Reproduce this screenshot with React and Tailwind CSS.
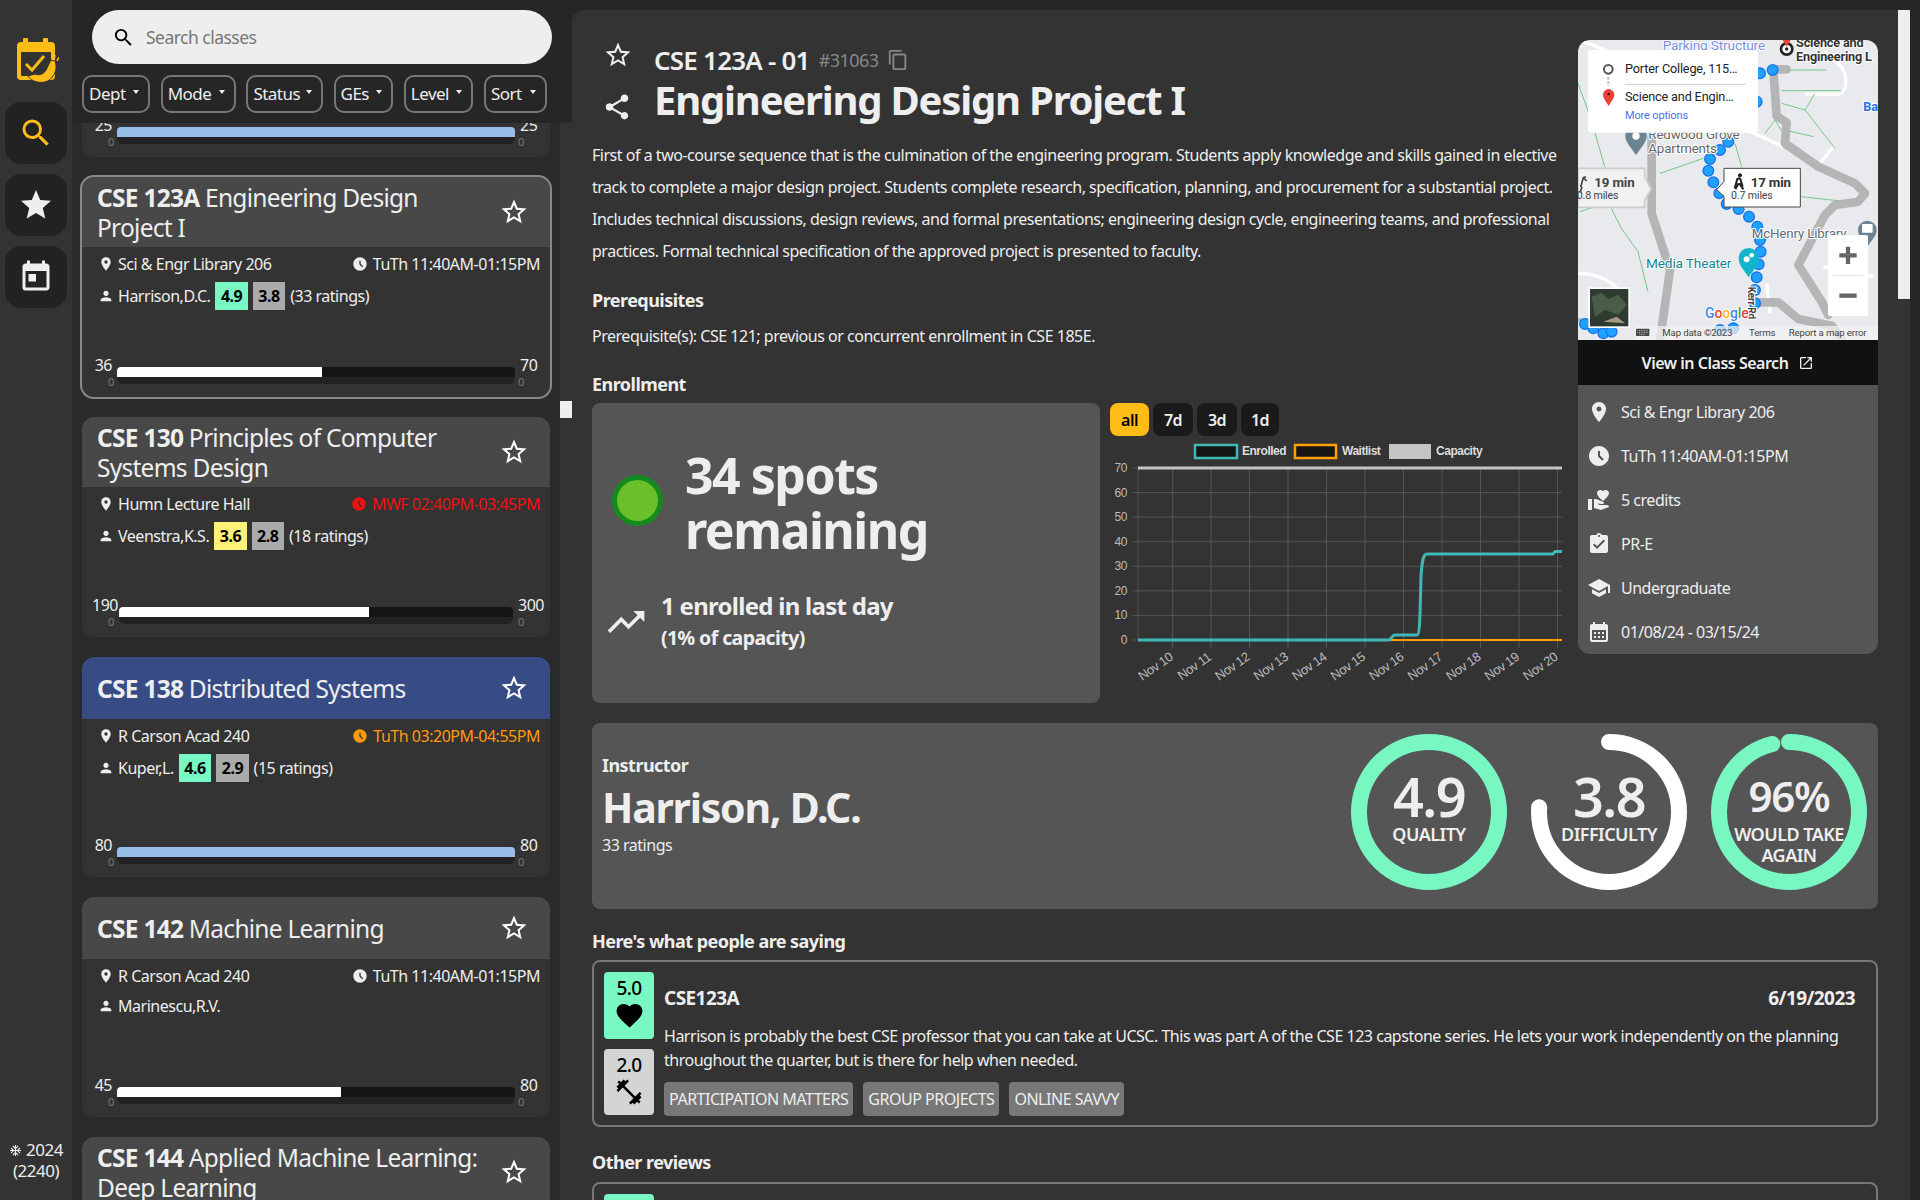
import React from "react";
import {
  MdSearch, MdStar, MdStarBorder, MdToday, MdLocationOn, MdAccessTimeFilled, MdPerson, MdShare,
  MdContentCopy, MdOpenInNew, MdTrendingUp, MdVolunteerActivism, MdAssignmentTurnedIn, MdSchool,
  MdCalendarMonth, MdFavorite, MdFitnessCenter, MdAcUnit,
} from "react-icons/md";

function Logo() {
  return (
    <svg width="42" height="46" viewBox="0 0 42 46" className="block">
      <rect x="0" y="4" width="38" height="38" rx="4" fill="#fdbd16" />
      <rect x="6" y="0" width="5" height="8" rx="1" fill="#fdbd16" />
      <rect x="26" y="0" width="5" height="8" rx="1" fill="#fdbd16" />
      <rect x="4" y="14" width="30" height="24" rx="1" fill="#333" />
      <path d="M9 26l6 6 12-14" fill="none" stroke="#fdbd16" strokeWidth="3" />
      <path d="M11 38c4 7 19 10 25 0 3-4 4-10 2-15l-4-1-4 8c-2 6-8 8-12 6z" fill="#fdbd16" stroke="#333" strokeWidth="1" />
      <path d="M37 22l1-5M40 23l2-4" stroke="#fdbd16" strokeWidth="1.6" />
    </svg>
  );
}

function NavButton({ children }) {
  return <div className="w-[62px] h-[62px] rounded-2xl bg-[#222] flex items-center justify-center">{children}</div>;
}

function Nav() {
  return (
    <div className="w-[72px] h-full bg-[#333] flex flex-col items-center shrink-0 pt-[38px]">
      <div className="h-[64px] ml-[4px]"><Logo /></div>
      <div className="flex flex-col gap-[10px]">
        <NavButton><MdSearch size={36} color="#fdbd16" /></NavButton>
        <NavButton><MdStar size={36} color="#eee" /></NavButton>
        <NavButton><MdToday size={36} color="#eee" /></NavButton>
      </div>
      <div className="mt-auto mb-[19px] text-[17px] leading-[21px] text-[#eee] text-center">
        <MdAcUnit className="inline mr-1 -mt-[2px]" size={13} />2024<br />(2240)
      </div>
    </div>
  );
}

function Filter({ label, w }) {
  return (
    <div style={{ width: w }} className="h-[38px] rounded-[10px] border-2 border-[#777] text-[#eee] text-[17px] flex items-center pl-[5px] relative">
      {label}
      <span className="absolute right-[9px] top-[13px] border-x-[3.5px] border-x-transparent border-t-[4px] border-t-[#eee]" />
    </div>
  );
}

function Bar({ cur, cap, wide, full }) {
  const pct = Math.min(100, (cur / cap) * 100);
  const span = wide ? "left-[37px] right-[37px]" : "left-[35px] right-[35px]";
  return (
    <div className="mt-auto h-[30px] relative">
      <div className={`absolute top-[1px] left-0 ${wide ? "w-[36px]" : "w-[30px]"} text-right text-[16px] leading-[20px] text-[#eee]`}>{cur}</div>
      <div className={`absolute ${span} top-[16px] h-[14px] rounded-b-md bg-[#222]`} />
      <div className={`absolute ${span} top-[13px] h-[10px] rounded-t-sm bg-[#151515] overflow-hidden`}>
        <div style={{ width: `${pct}%` }} className={`h-full ${full ? "bg-[#97bde9]" : "bg-white"}`} />
      </div>
      <div className={`absolute top-[1px] ${wide ? "left-[436px]" : "left-[438px]"} text-[16px] leading-[20px] text-[#eee]`}>{cap}</div>
      <div className="absolute top-[20px] left-[26px] text-[11px] leading-[16px] text-[#777]">0</div>
      <div className="absolute top-[20px] left-[436px] text-[11px] leading-[16px] text-[#777]">0</div>
    </div>
  );
}

function Badge({ v, color }) {
  return <span style={{ background: color }} className="h-[28px] px-[5.5px] flex items-center font-bold text-black text-[16px]">{v}</span>;
}

function Card({ code, name, loc, time, timeColor, prof, q, qc, d, ratings, cur, cap, wide, selected, blue, twoLine, className = "" }) {
  const full = cur >= cap;
  return (
    <div className={`h-[220px] rounded-xl overflow-hidden bg-[#333] flex flex-col shrink-0 ${selected ? "outline-2 outline-[#888] overflow-visible" : ""} ${className}`}>
      <div className={`${twoLine ? "h-[70px]" : "h-[62px]"} shrink-0 rounded-t-xl ${blue ? "bg-[#374b85]" : "bg-[#484848]"} flex items-center justify-between pl-[15px] pr-[21px] text-[#eee]`}>
        <div className="w-[385px] text-[24.5px] leading-[30px] mt-[2px]"><b className="font-bold">{code}</b> {name}</div>
        <MdStarBorder size={30} color="#fff" className="shrink-0" />
      </div>
      <div className="flex-1 flex flex-col pb-[13px] text-[#eee]">
        <div className="flex justify-between items-center h-[20px] mt-[7px] pl-[16px] pr-[10px] text-[16px]">
          <span className="flex items-center gap-[4px]"><MdLocationOn size={16} />{loc}</span>
          <span className="flex items-center gap-[5px]" style={{ color: timeColor }}><MdAccessTimeFilled size={16} />{time}</span>
        </div>
        <div className={`flex items-center gap-[5px] h-[28px] ${q ? "mt-[8px]" : "mt-[6px]"} pl-[16px] text-[16px]`}>
          <MdPerson size={16} className="mr-[-1px]" /><span>{prof}</span>
          {q && <Badge v={q} color={qc} />}
          {d && <Badge v={d} color="#aaa" />}
          {ratings && <span>({ratings} ratings)</span>}
        </div>
        <Bar cur={cur} cap={cap} wide={wide} full={full} />
      </div>
    </div>
  );
}

function Sidebar() {
  return (
    <div className="w-[500px] h-full shrink-0 flex flex-col">
      <div className="h-[123px] shrink-0 bg-[#262626] z-10 pl-[10px] pt-[10px]">
        <div className="ml-[10px] w-[460px] h-[54px] rounded-full bg-[#eee] flex items-center pl-[20px] gap-[11px] text-[#777] text-[17.5px]">
          <MdSearch size={23} color="#000" /> Search classes
        </div>
        <div className="flex gap-[10.7px] mt-[11px]">
          <Filter label="Dept" w={68} /><Filter label="Mode" w={75} /><Filter label="Status" w={76.5} />
          <Filter label="GEs" w={59.5} /><Filter label="Level" w={69.5} /><Filter label="Sort" w={63.5} />
        </div>
      </div>
      <div className="flex-1 flex min-h-0">
        <div className="w-[488px] shrink-0 bg-[#2a2a2a] overflow-hidden pl-[10px] pr-[10px] flex flex-col gap-[20px]">
          <Card className="-mt-[186px]" code="" name="" loc="" time="" prof="" cur={25} cap={25} />
          <Card selected twoLine code="CSE 123A" name="Engineering Design Project I" loc="Sci & Engr Library 206" time="TuTh 11:40AM-01:15PM" prof="Harrison,D.C." q="4.9" qc="#78f7c3" d="3.8" ratings="33" cur={36} cap={70} />
          <Card twoLine code="CSE 130" name="Principles of Computer Systems Design" loc="Humn Lecture Hall" time="MWF 02:40PM-03:45PM" timeColor="#f01010" prof="Veenstra,K.S." q="3.6" qc="#fff176" d="2.8" ratings="18" cur={190} cap={300} wide />
          <Card blue code="CSE 138" name="Distributed Systems" loc="R Carson Acad 240" time="TuTh 03:20PM-04:55PM" timeColor="#ff9a0d" prof="Kuper,L." q="4.6" qc="#78f7c3" d="2.9" ratings="15" cur={80} cap={80} />
          <Card code="CSE 142" name="Machine Learning" loc="R Carson Acad 240" time="TuTh 11:40AM-01:15PM" prof="Marinescu,R.V." cur={45} cap={80} />
          <Card twoLine code="CSE 144" name="Applied Machine Learning: Deep Learning" loc="" time="" prof="" cur={0} cap={0} />
        </div>
        <div className="w-[12px] bg-[#333] pt-[278px]">
          <div className="h-[17px] bg-[#eee]" />
        </div>
      </div>
    </div>
  );
}

function MapView() {
  const dots = [[638,150],[600,160],[590,245],[505,365],[480,390],[450,417],[445,452],[460,487],[478,520],[500,552],[536,567],[567,590],[592,620],[600,660],[602,695],[596,733],[590,772],[585,810],[585,850],[75,912],[100,925],[130,940],[155,935],[480,930],[520,925]];
  const halo = { paintOrder: "stroke", stroke: "#fff", strokeWidth: 6, strokeLinejoin: "round" };
  return (
    <svg viewBox="54 60 900 900" width="300" height="300" className="block" style={{ fontFamily: "Roboto, sans-serif" }}>
      <rect x="54" y="60" width="900" height="900" fill="#e8eaed" />
      <g fill="none" stroke="#fff" strokeWidth="10">
        <path d="M560 330l110 50M735 222h100c30 0 30-70 0-90l-40-40M54 760c60 0 100 20 130 60M780 430l40-50M60 60l100 40M790 740l150 30M620 790l10 90" />
      </g>
      <g fill="none" stroke="#5fbf75" strokeWidth="2.5">
        <path d="M54 190l40 110 40 140M300 460l130-45M525 370l20 70M724 530l180 20M154 565l30 60 50 70 30 120M60 575l60-20M680 150h120M664 212h180M735 270l-70-20M735 270l90 115M735 270l30-50M615 340l30-40 30 50M675 330l85 20" />
      </g>
      <g fill="none" stroke="#b5b5b5" strokeWidth="26" strokeLinejoin="round" strokeLinecap="round">
        <path d="M680 148h-40l10 140 30 20-5 62 100 70 110 50 30 30-20 25-70 10-30 30-80 150 70 110 20 40" />
        <path d="M275 350v230l55 170-30 210" />
        <path d="M595 847h60l60 50 100 20 30 40" />
      </g>
      <path d="M54 900h60" stroke="#b5b5b5" strokeWidth="10" />
      {dots.map(([x, y], i) => <circle key={i} cx={x} cy={y} r="16" fill="#1ea1ff" stroke="#1a73e8" strokeWidth="4" />)}
      <text x="308" y="90" fontSize="41" fill="#7b8fe0" style={halo}>Parking Structure</text>
      <circle cx="680" cy="87" r="17" fill="#fff" stroke="#222" strokeWidth="8" /><circle cx="680" cy="87" r="5" fill="#222" />
      <path d="M668 60h24l-12 20z" fill="#ea4335" />
      <text x="708" y="80" fontSize="38" fontWeight="700" fill="#333" style={halo}>Science and</text>
      <text x="708" y="122" fontSize="38" fontWeight="700" fill="#333" style={halo}>Engineering L</text>
      <text x="910" y="272" fontSize="38" fontWeight="700" fill="#1a73e8" style={halo}>Ba</text>
      <path d="M228 405c-20-30-32-40-32-58a32 32 0 0 1 64 0c0 18-12 28-32 58z" fill="#6b8494" /><circle cx="228" cy="348" r="11" fill="#fff" />
      <text x="265" y="358" fontSize="40" fill="#666" style={halo}>Redwood Grove</text>
      <text x="265" y="400" fontSize="40" fill="#666" style={halo}>Apartments</text>
      <text x="575" y="653" fontSize="40" fill="#5f6b7a" style={halo}>McHenry Library</text>
      <path d="M922 680c-16-24-28-32-28-50a28 28 0 0 1 56 0c0 18-12 26-28 50z" fill="#6b8494" /><rect x="906" y="612" width="32" height="26" rx="3" fill="#fff" />
      <text x="258" y="743" fontSize="41" fill="#12858f" style={halo}>Media Theater</text>
      <path d="M566 772c-18-28-30-36-30-58a30 30 0 0 1 60 0c0 22-12 30-30 58z" fill="#12b5cb" /><circle cx="560" cy="718" r="9" fill="#fff" /><circle cx="575" cy="706" r="7" fill="#fff" />
      <text fontSize="30" fontWeight="700" fill="#444" transform="translate(565 800) rotate(90)" style={halo}>Kerr Rd</text>
      <path d="M84 100a10 10 0 0 1 10-10h490a10 10 0 0 1 10 10v228a10 10 0 0 1-10 10h-490a10 10 0 0 1-10-10z" fill="#fff" />
      <circle cx="145" cy="148" r="13" fill="none" stroke="#555" strokeWidth="6" />
      <path d="M145 172v26" stroke="#c4c4c4" strokeWidth="7" strokeDasharray="7 5" />
      <path d="M146 258c-10-18-17-24-17-34a17 17 0 0 1 34 0c0 10-7 16-17 34z" fill="#ea4335" /><circle cx="146" cy="222" r="4" fill="#3b0a0a" />
      <text x="195" y="158" fontSize="38" fill="#222">Porter College, 115…</text>
      <path d="M195 193h363" stroke="#ccc" strokeWidth="3" />
      <text x="195" y="242" fontSize="38" fill="#222">Science and Engin…</text>
      <text x="195" y="297" fontSize="33" fill="#4f6ff0">More options</text>
      <path d="M54 445h200v25l20 38-20 32v22H54z" fill="#f1f1f1" stroke="#ccc" strokeWidth="5" />
      <text x="103" y="500" fontSize="40" fontWeight="700" fill="#444">19 min</text>
      <text x="50" y="536" fontSize="32" fill="#444">0.8 miles</text>
      <path d="M78 470l-8 3-8 28M70 473l10 10M66 500l-6 18" stroke="#444" strokeWidth="5" fill="none" />
      <path d="M492 445h229v116h-229v-32l-22-20 22-24z" fill="#fff" stroke="#444" strokeWidth="3" />
      <text x="572" y="500" fontSize="40" fontWeight="700" fill="#333">17 min</text>
      <text x="513" y="538" fontSize="32" fill="#444">0.7 miles</text>
      <circle cx="540" cy="466" r="6" fill="#222" />
      <path d="M540 474l-8 3-8 28M540 474l8 26M536 490l-10 18M538 490l12 18" stroke="#222" strokeWidth="6" fill="none" />
      <rect x="804" y="645" width="120" height="243" rx="6" fill="#fff" />
      <path d="M838 706h52M864 680v52" stroke="#666" strokeWidth="13" />
      <path d="M820 767h88" stroke="#e2e2e2" strokeWidth="3" />
      <path d="M838 827h52" stroke="#666" strokeWidth="13" />
      <rect x="85" y="802" width="125" height="122" fill="#fff" />
      <rect x="90" y="807" width="115" height="112" fill="#2f3b30" />
      <path d="M95 830l30-12 20 20 30-14 25 30-25 30-40-14-30 20z" fill="#4a5d48" />
      <path d="M130 905l40-15 25 20z" fill="#a39a82" />
      <text x="435" y="893" fontSize="42" fontWeight="500" fill="#4285f4" style={halo}>G<tspan fill="#ea4335">o</tspan><tspan fill="#fbbc05">o</tspan><tspan fill="#4285f4">g</tspan><tspan fill="#34a853">l</tspan><tspan fill="#ea4335">e</tspan></text>
      <rect x="225" y="918" width="729" height="42" fill="#f1f1f1" fillOpacity="0.75" />
      <rect x="228" y="926" width="40" height="22" rx="2" fill="#444" />
      <path d="M232 932h32M232 938h32M238 944h20" stroke="#eee" strokeWidth="2" strokeDasharray="3 2" />
      <text x="307" y="948" fontSize="29" fill="#444">Map data ©2023</text>
      <text x="567" y="948" fontSize="29" fill="#444">Terms</text>
      <text x="686" y="948" fontSize="29" fill="#444">Report a map error</text>
    </svg>
  );
}

function Chart() {
  const X0 = 1138, X1 = 1562, Y0 = 640, Y70 = 468;
  const y = (v) => Y0 - ((Y0 - Y70) * v) / 70;
  const ticksY = [0, 10, 20, 30, 40, 50, 60, 70];
  const ticksX = [1172.7, 1211, 1249.5, 1288, 1326.5, 1365, 1403.5, 1442, 1480.5, 1519, 1557.5];
  return (
    <svg viewBox="1110 436 452 267" width="452" height="267" className="block" style={{ fontFamily: "'Liberation Sans', Arial, sans-serif" }}>
      <rect x="1195" y="445" width="42" height="13" fill="#151515" stroke="#40b8b8" strokeWidth="2.5" />
      <text x="1242" y="455" fontSize="12" fontWeight="700" fill="#ddd">Enrolled</text>
      <rect x="1295" y="445" width="41" height="13" fill="#151515" stroke="#ff9f0a" strokeWidth="2.5" />
      <text x="1342" y="455" fontSize="12" fontWeight="700" fill="#ddd">Waitlist</text>
      <rect x="1389" y="444" width="42" height="15" fill="#c4c4c4" />
      <text x="1436" y="455" fontSize="12" fontWeight="700" fill="#ddd">Capacity</text>
      {ticksY.map((t) => (
        <g key={t}>
          <path d={`M${X0 - 6} ${y(t)}H${X1}`} stroke="#555" strokeWidth="1" />
          <text x="1127" y={y(t) + 4} fontSize="12" textAnchor="end" fill="#bbb">{t}</text>
        </g>
      ))}
      <path d={`M${X0} ${Y70}V${Y0}`} stroke="#555" />
      {ticksX.map((t, i) => (
        <g key={t}>
          <path d={`M${t} ${Y70}V${Y0 + 8}`} stroke="#555" strokeWidth="1" />
          <text transform={`translate(${t + 1} 659) rotate(-35)`} fontSize="13" textAnchor="end" fill="#bbb">Nov {i + 10}</text>
        </g>
      ))}
      <path d={`M${X0} ${Y70}H${X1}`} stroke="#c4c4c4" strokeWidth="3" />
      <path d={`M${X0} ${Y0}H${X1}`} stroke="#ff9f0a" strokeWidth="2" />
      <path d={`M${X0} ${Y0}H1389C1391 ${Y0} 1392 ${y(2)} 1395 ${y(2)}H1417C1420 ${y(2)} 1420 ${y(10)} 1421 ${y(26)}C1422 ${y(32)} 1423 ${y(35)} 1427 ${y(35)}H1553L1555 ${y(36)}H${X1}`} fill="none" stroke="#40b8b8" strokeWidth="3" />
    </svg>
  );
}

function Gauge({ pct, color, value, label, big }) {
  const r = 70, c = 2 * Math.PI * r;
  return (
    <div className="w-[156px] h-[156px] relative">
      <svg viewBox="0 0 156 156" width="156" height="156" className="-rotate-90 block">
        <circle cx="78" cy="78" r={r} fill="none" stroke={color} strokeWidth="16" strokeLinecap="round" strokeDasharray={`${(c * pct) / 100} ${c}`} />
      </svg>
      <div className="absolute inset-0 flex flex-col items-center pt-[32px] text-[#eee] text-center">
        <div className={`${big ? "text-[54px]" : "text-[42px]"} leading-[60px] font-semibold`}>{value}</div>
        <div className="text-[18px] leading-[21px] font-semibold -mt-[2px] w-[120px]">{label}</div>
      </div>
    </div>
  );
}

function Info({ icon, children }) {
  return <div className="h-[44px] flex items-center gap-[10px] text-[16px]">{icon}<span>{children}</span></div>;
}

function Rating({ v, color, icon }) {
  return (
    <div style={{ background: color }} className="w-[50px] h-[67px] rounded text-black flex flex-col items-center pt-[4px]">
      <div className="text-[19px] leading-[24px] font-medium">{v}</div>
      {icon}
    </div>
  );
}

function Tag({ children }) {
  return <span className="h-[34px] px-[5px] bg-[#777] rounded text-[#eee] text-[16px] flex items-center">{children}</span>;
}

function Main() {
  return (
    <div className="flex-1 h-[1190px] mt-[10px] mr-[10px] rounded-tl-xl bg-[#333] text-[#eee] pl-[20px] pr-[32px] pt-[30px] overflow-hidden relative">
      <div className="absolute right-0 top-0 w-[12px] h-[289px] bg-[#eee]" />
      <div className="flex gap-[16px]">
        <div className="w-[970px] shrink-0">
          <div className="flex h-[99px]">
            <div className="w-[62px] pl-[10px] flex flex-col">
              <MdStarBorder size={30} className="ml-[1px]" />
              <MdShare size={30} className="mt-[22px]" />
            </div>
            <div>
              <div className="h-[40px] flex items-center text-[26px] font-semibold">
                CSE 123A - 01
                <span className="text-[18px] font-normal text-[#888] ml-[9px]">#31063</span>
                <MdContentCopy size={22} className="ml-[8px] text-[#888]" />
              </div>
              <div className="h-[40px] flex items-center text-[40px] font-bold">Engineering Design Project I</div>
            </div>
          </div>
          <p className="text-[16px] leading-[32px]">First of a two-course sequence that is the culmination of the engineering program. Students apply knowledge and skills gained in elective track to complete a major design project. Students complete research, specification, planning, and procurement for a substantial project. Includes technical discussions, design reviews, and formal presentations; engineering design cycle, engineering teams, and professional practices. Formal technical specification of the approved project is presented to faculty.</p>
          <h3 className="text-[18px] leading-[24px] font-bold mt-[21px]">Prerequisites</h3>
          <p className="text-[16px] leading-[24px] mt-[12px]">Prerequisite(s): CSE 121; previous or concurrent enrollment in CSE 185E.</p>
          <h3 className="text-[18px] leading-[24px] font-bold mt-[24px]">Enrollment</h3>
          <div className="flex gap-[10px] mt-[7px]">
            <div className="w-[508px] h-[300px] rounded-lg bg-[#555] flex flex-col shrink-0">
              <div className="flex items-center pl-[20px] pt-[45px]">
                <div className="w-[51px] h-[51px] rounded-full bg-[#6abf2a] border-[5px] border-[#158a1e] mb-[6px]" />
                <div className="ml-[22px] text-[50px] leading-[55px] font-bold w-[300px]">34 spots remaining</div>
              </div>
              <div className="flex items-center pl-[12px] mt-[32px]">
                <MdTrendingUp size={44} />
                <div className="ml-[13px] font-bold">
                  <div className="text-[24px] leading-[32px]">1 enrolled in last day</div>
                  <div className="text-[19.5px] leading-[31px]">(1% of capacity)</div>
                </div>
              </div>
            </div>
            <div className="w-[452px]">
              <div className="flex gap-[4px] h-[33px] font-semibold text-[16px]">
                <span className="w-[39px] rounded-lg bg-[#fdbd16] text-black flex items-center justify-center">all</span>
                <span className="w-[40px] rounded-lg bg-[#1a1a1a] flex items-center justify-center">7d</span>
                <span className="w-[40px] rounded-lg bg-[#1a1a1a] flex items-center justify-center">3d</span>
                <span className="w-[38px] rounded-lg bg-[#1a1a1a] flex items-center justify-center">1d</span>
              </div>
              <Chart />
            </div>
          </div>
        </div>
        <div className="w-[300px] shrink-0 self-start rounded-xl overflow-hidden">
          <MapView />
          <div className="h-[45px] bg-[#111] flex items-center justify-center gap-[10px] font-semibold text-[16px]">View in Class Search <MdOpenInNew size={16} /></div>
          <div className="h-[269px] bg-[#555] pl-[9px] pt-[5px]">
            <Info icon={<MdLocationOn size={24} />}>Sci & Engr Library 206</Info>
            <Info icon={<MdAccessTimeFilled size={24} />}>TuTh 11:40AM-01:15PM</Info>
            <Info icon={<MdVolunteerActivism size={24} />}>5 credits</Info>
            <Info icon={<MdAssignmentTurnedIn size={24} />}>PR-E</Info>
            <Info icon={<MdSchool size={24} />}>Undergraduate</Info>
            <Info icon={<MdCalendarMonth size={24} />}>01/08/24 - 03/15/24</Info>
          </div>
        </div>
      </div>
      <div className="mt-[20px] h-[186px] rounded-lg bg-[#555] flex items-start pl-[10px] pr-[11px]">
        <div className="flex-1 pt-[30px]">
          <div className="text-[18px] leading-[24px] font-bold">Instructor</div>
          <div className="text-[41px] leading-[56px] font-bold mt-[2px]">Harrison, D.C.</div>
          <div className="text-[16px] leading-[24px] -mt-[2px]">33 ratings</div>
        </div>
        <div className="flex gap-[24px] pt-[11px]">
          <Gauge pct={99.9} color="#78f7c3" value="4.9" label="QUALITY" big />
          <Gauge pct={76} color="#fff" value="3.8" label="DIFFICULTY" big />
          <Gauge pct={96} color="#78f7c3" value="96%" label="WOULD TAKE AGAIN" />
        </div>
      </div>
      <h3 className="text-[18px] leading-[24px] font-bold mt-[20px]">Here's what people are saying</h3>
      <div className="mt-[7px] h-[167px] rounded-lg border-2 border-[#777] p-[10px] flex gap-[10px]">
        <div className="flex flex-col gap-[10px]">
          <Rating v="5.0" color="#78f7c3" icon={<MdFavorite size={31} />} />
          <Rating v="2.0" color="#d4d4d4" icon={<MdFitnessCenter size={30} />} />
        </div>
        <div className="flex-1">
          <div className="flex justify-between items-center h-[34px] mt-[9px] font-bold text-[19px] pr-[11px]"><span>CSE123A</span><span>6/19/2023</span></div>
          <p className="text-[16px] leading-[24px] mt-[9px]">Harrison is probably the best CSE professor that you can take at UCSC. This was part A of the CSE 123 capstone series. He lets your work independently on the planning throughout the quarter, but is there for help when needed.</p>
          <div className="flex gap-[10px] mt-[10px]">
            <Tag>PARTICIPATION MATTERS</Tag><Tag>GROUP PROJECTS</Tag><Tag>ONLINE SAVVY</Tag>
          </div>
        </div>
      </div>
      <h3 className="text-[18px] leading-[24px] font-bold mt-[23px]">Other reviews</h3>
      <div className="mt-[8px] h-[167px] rounded-lg border-2 border-[#777] p-[10px]">
        <Rating v="" color="#78f7c3" />
      </div>
    </div>
  );
}

export default function App() {
  return (
    <div className="h-[1200px] w-full flex overflow-hidden bg-[#262626] font-['Noto_Sans','Open_Sans',sans-serif] [&_:is(div,span,p,h3,b)]:tracking-[-0.03em]">
      <Nav />
      <Sidebar />
      <Main />
    </div>
  );
}
